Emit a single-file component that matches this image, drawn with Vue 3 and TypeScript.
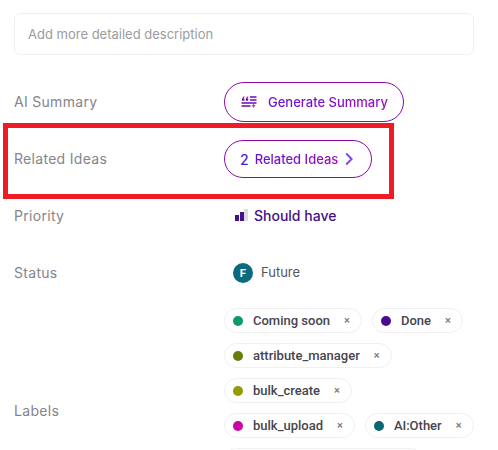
<script setup lang="ts">
interface Chip { name: string; color: string }
const chipRows: Chip[][] = [
  [{ name: 'Coming soon', color: '#0a9b6b' }, { name: 'Done', color: '#4b0a91' }],
  [{ name: 'attribute_manager', color: '#667d0a' }],
  [{ name: 'bulk_create', color: '#939a05' }],
  [{ name: 'bulk_upload', color: '#c905a5' }, { name: 'AI:Other', color: '#0a6672' }]
]
</script>

<template>
  <div class="page">
    <div class="description">Add more detailed description</div>

    <div class="row first">
      <div class="label">AI Summary</div>
      <button class="pill generate">
        <svg class="sum-icon" viewBox="0 0 16 14" width="16" height="14" aria-hidden="true">
          <path d="M1 4.8c0-1.8.8-2.9 2.4-3.6v1.1c-.6.3-.9.7-.9 1.2h.9v2.3H1zM4.8 4.8c0-1.8.8-2.9 2.4-3.6v1.1c-.6.3-.9.7-.9 1.2h.9v2.3H4.8z" fill="#6a0dad" />
          <path d="M9 2h6.5M9 5h6.5M.5 8h15M.5 11h9" stroke="#6a0dad" stroke-width="1.4" fill="none" />
          <path d="M12.5 8.5l.7 1.6 1.6.7-1.6.7-.7 1.6-.7-1.6-1.6-.7 1.6-.7z" fill="#9a3fd0" />
        </svg>
        <span class="gradient-text">Generate Summary</span>
      </button>
    </div>

    <div class="row">
      <div class="label">Related Ideas</div>
      <button class="pill related">
        <span class="count">2</span>
        <span class="gradient-text">Related Ideas</span>
        <svg viewBox="0 0 8 14" width="8" height="14" aria-hidden="true">
          <path d="M1.2 1.5L6.6 7l-5.4 5.5" stroke="#7c4dea" stroke-width="2" fill="none" />
        </svg>
      </button>
    </div>

    <div class="row">
      <div class="label">Priority</div>
      <div class="priority">
        <span class="bars"><i class="bar b1"></i><i class="bar b2"></i><i class="bar b3"></i></span>
        <span>Should have</span>
      </div>
    </div>

    <div class="row">
      <div class="label">Status</div>
      <div class="status">
        <span class="avatar">F</span>
        <span class="status-text">Future</span>
      </div>
    </div>

    <div class="row labels-row">
      <div class="label">Labels</div>
      <div class="chips">
        <div v-for="(chipRow, i) in chipRows" :key="i" class="chip-row">
          <div v-for="chip in chipRow" :key="chip.name" class="chip">
            <span class="dot" :style="{ background: chip.color }"></span>
            <span class="chip-name">{{ chip.name }}</span>
            <span class="close">×</span>
          </div>
        </div>
        <div class="chip-row"><div class="chip chip-cut"></div></div>
      </div>
    </div>

    <div class="highlight"></div>
  </div>
</template>

<style>
html, body { margin: 0; background: #fff; overflow: hidden; }
</style>

<style scoped>
.page {
  position: relative;
  width: 498px;
  height: 450px;
  overflow: hidden;
  box-sizing: border-box;
  padding: 13px 24px 0 14px;
  font-family: Inter, "Liberation Sans", sans-serif;
  background: #fff;
}
.description {
  box-sizing: border-box;
  height: 42px;
  border: 1px solid #efeff2;
  border-radius: 6px;
  padding: 0 13px;
  display: flex;
  align-items: center;
  font-size: 13px;
  color: #9b9b9f;
}
.row {
  display: grid;
  grid-template-columns: 210px 1fr;
  align-items: center;
  height: 57px;
}
.row.first { margin-top: 18.5px; }
.label { font-size: 14px; letter-spacing: 0.3px; color: #85858b; padding-bottom: 2px; }
.pill {
  box-sizing: border-box;
  display: inline-flex;
  align-items: center;
  justify-self: start;
  background: #fff;
  border: 1px solid #8a0aa8;
  border-radius: 20px;
  font-family: inherit;
  font-size: 13px;
  font-weight: 500;
  padding: 0;
}
.generate { width: 180px; height: 40px; padding-left: 16px; gap: 11px; }
.related { width: 148px; height: 38px; padding-left: 15px; gap: 6px; }
.gradient-text {
  background: linear-gradient(90deg, #6a12d4, #9a0fb8);
  -webkit-background-clip: text;
  background-clip: text;
  color: transparent;
}
.count { font-size: 14px; color: #4a1fe0; }
.related svg { margin-left: 1px; }
.priority {
  display: flex;
  align-items: center;
  gap: 5.6px;
  font-size: 14px;
  font-weight: 500;
  color: #43108a;
  padding-left: 11px;
  padding-bottom: 2px;
}
.bars { display: flex; align-items: flex-end; gap: 0.7px; height: 12px; }
.bar { display: block; width: 4px; background: #43108a; }
.b1 { height: 6px; }
.b2 { height: 9px; }
.b3 { height: 12px; background: #dcdce0; }
.status { display: flex; align-items: center; gap: 8px; padding-left: 9px; }
.avatar {
  width: 20px;
  height: 20px;
  border-radius: 50%;
  background: #0a6a80;
  color: #fff;
  font-size: 11px;
  font-weight: 700;
  display: flex;
  align-items: center;
  justify-content: center;
}
.status-text { font-size: 13px; color: #55555c; margin-top: -2px; }
.labels-row { height: 206px; margin-top: 6.5px; }
.chips { display: flex; flex-direction: column; gap: 10px; align-self: start; }
.chip-row { display: flex; gap: 10px; }
.chip {
  box-sizing: border-box;
  height: 25px;
  display: flex;
  align-items: center;
  border: 1px solid #f0f0f4;
  border-radius: 13px;
  padding: 0 11px 0 8px;
  font-family: Roboto, "Liberation Sans", sans-serif;
  font-size: 13px;
  font-weight: 500;
  color: #45454d;
}
.chip-cut { width: 199px; }
.dot { width: 10px; height: 10px; border-radius: 50%; margin-right: 10px; }
.chip-name { margin-right: 14px; }
.close { font-size: 11px; color: #7a7a82; line-height: 1; }
.highlight {
  position: absolute;
  left: 3px;
  top: 123px;
  width: 391px;
  height: 76px;
  box-sizing: border-box;
  border: 5px solid #ee1c25;
  pointer-events: none;
}
</style>
